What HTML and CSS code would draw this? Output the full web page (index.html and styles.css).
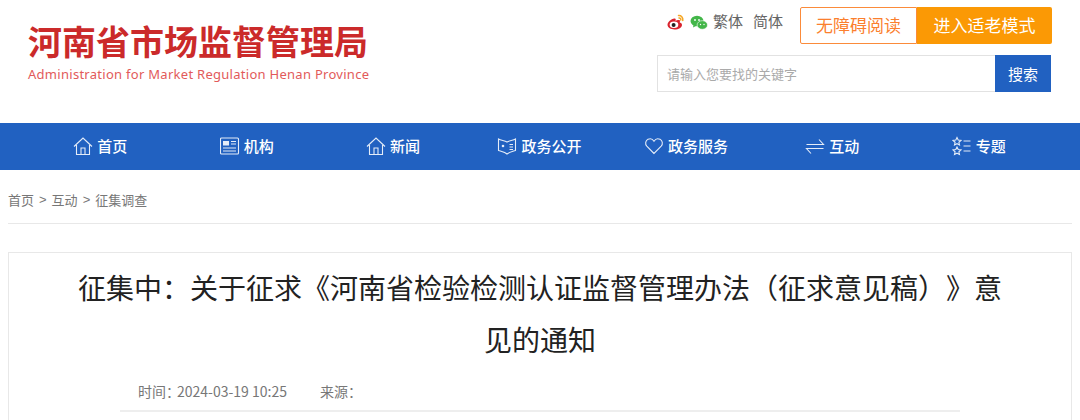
FILE: index.html
```html
<!DOCTYPE html>
<html lang="zh-CN">
<head>
<meta charset="utf-8">
<title>河南省市场监督管理局</title>
<link rel="stylesheet" href="styles.css">
</head>
<body>
<header class="top">
  <div class="brand">
    <div class="brand-cn">河南省市场监督管理局</div>
    <div class="brand-en">Administration for Market Regulation Henan Province</div>
  </div>
  <div class="tools">
    <div class="tools-row">
      <div class="social">
        <svg class="soc-icon" width="20" height="18" viewBox="0 0 20 18"><path d="M8.500 5.500C5 6 1.500 9 1.500 11.800c0 2.800 3.400 4.700 7 4.700 4.300 0 7.500-2.400 7.500-4.600 0-1.500-1.400-2-2.300-2.300.5-1.300.4-2.200-.4-2.500-1-.4-2.800.3-3.800.8.300-1 .3-1.800-.2-2.200-.2-.2-.5-.3-.8-.2z" fill="#d9232e"/><ellipse cx="8" cy="11.800" rx="4.300" ry="3.300" fill="#fff"/><circle cx="7.600" cy="11.900" r="2" fill="#222"/><path d="M12.500 2.500c2.500-.3 4.800 1.700 4.300 5M13 5c1.200-.1 2 .8 1.800 2" fill="none" stroke="#f5a623" stroke-width="1.500" stroke-linecap="round"/></svg>
        <svg class="soc-icon soc-wechat" width="18" height="16" viewBox="0 0 18 16"><ellipse cx="7" cy="6" rx="6.500" ry="5.200" fill="#43b649"/><path d="M3.500 10l-.5 2.500 3-1.500z" fill="#43b649"/><ellipse cx="12.300" cy="10" rx="5.200" ry="4.300" fill="#43b649" stroke="#fff" stroke-width=".6"/><circle cx="5" cy="5" r=".9" fill="#fff"/><circle cx="9" cy="5" r=".9" fill="#fff"/><circle cx="10.500" cy="9.500" r=".7" fill="#fff"/><circle cx="14" cy="9.500" r=".7" fill="#fff"/></svg>
        <a class="lang">繁体</a>
        <a class="lang">简体</a>
      </div>
      <div class="btns">
        <a class="btn btn-outline">无障碍阅读</a>
        <a class="btn btn-solid">进入适老模式</a>
      </div>
    </div>
    <div class="search">
      <div class="search-input">请输入您要找的关键字</div>
      <div class="search-btn">搜索</div>
    </div>
  </div>
</header>

<nav class="nav">
  <a class="nav-item">
    <svg class="ico" viewBox="0 0 20 20"><path d="M1 10.500 10 2l9 8.500M3.500 9v9.500h13V9M8 18.500V12h4v6.500"/></svg>首页
  </a>
  <a class="nav-item">
    <svg class="ico" viewBox="0 0 20 20"><rect x=".5" y="2" width="18" height="16" rx="1"/><rect class="fill" x="3" y="5" width="6" height="4.500"/><path d="M11 5.500h5M11 8h5M3 12h13M3 15h13"/></svg>机构
  </a>
  <a class="nav-item">
    <svg class="ico" viewBox="0 0 20 20"><path d="M1 10.500 10 2l9 8.500M3.500 9v9.500h13V9M8 18.500V12h4v6.500"/></svg>新闻
  </a>
  <a class="nav-item">
    <svg class="ico" viewBox="0 0 20 20"><path d="M1.500 3c2.500 1.500 6 1.500 8.500 3 2.500-1.500 6-1.500 8.500-3v11.500c-2.500 1-6 1.500-8.500 3.500-2.500-2-6-2.500-8.500-3.500zM12.500 8.500h3.500M12.500 11h3.500M12.500 13.500h3.500"/><circle class="fill" cx="6" cy="10" r="1.300"/></svg>政务公开
  </a>
  <a class="nav-item">
    <svg class="ico" viewBox="0 0 20 20"><path d="M10 17.500 2.800 10.200C.8 8 1.500 4.500 4 3.300c2.300-1.100 4.700-.2 6 1.900 1.300-2.100 3.700-3 6-1.900 2.500 1.200 3.200 4.700 1.200 6.900z"/></svg>政务服务
  </a>
  <a class="nav-item">
    <svg class="ico" viewBox="0 0 20 20"><path d="M1.500 8.500h17l-4.500-5M18.500 12.500h-17l4.500 5"/></svg>互动
  </a>
  <a class="nav-item">
    <svg class="ico" viewBox="0 0 20 20"><path d="M5 1.500l1.200 2.600 2.800.3-2.100 1.900.6 2.700L5 7.700 2.500 9l.6-2.700L1 4.400l2.800-.3zM5 11l1.200 2.600 2.800.3-2.100 1.900.6 2.700L5 17.200l-2.500 1.300.6-2.700L1 13.900l2.800-.3zM11.500 5h7M11.500 10h7M11.500 15h7"/></svg>专题
  </a>
</nav>

<div class="crumbs">
  <a>首页</a><span class="sep">&gt;</span><a>互动</a><span class="sep">&gt;</span><a>征集调查</a>
</div>

<main class="card">
  <h1 class="title">征集中：关于征求《河南省检验检测认证监督管理办法（征求意见稿）》意见的通知</h1>
  <div class="meta">
    <span>时间：<span class="meta-date">2024-03-19 10:25</span></span>
    <span>来源：</span>
  </div>
</main>
</body>
</html>
```
FILE: styles.css
```css
* { box-sizing: border-box; }
html, body { margin: 0; padding: 0; height: 420px; overflow: hidden; background: #fff; }
body { font-family: "Noto Sans CJK SC", "Liberation Sans", sans-serif; color: #333; }
svg { display: block; }

.top { height: 123px; padding: 7px 28px 0 28px; display: flex; justify-content: space-between; }
.brand { padding-top: 13px; }
.brand-cn { font-size: 34px; line-height: 42px; font-weight: 700; color: #cb2a2a; white-space: nowrap; }
.brand-en { margin-top: 3px; font-family: "Noto Sans", sans-serif; font-size: 13px; line-height: 18px; letter-spacing: .28px; color: #e25a5a; white-space: nowrap; }

.tools { width: 395px; }
.tools-row { display: flex; justify-content: space-between; height: 37px; }
.social { display: flex; align-items: flex-start; padding: 5px 0 0 9px; }
.soc-icon { margin-right: 4px; margin-top: 1px; }
.soc-wechat { margin-top: 3px; }
.lang { font-size: 15px; line-height: 20px; color: #666; margin: -1px 9px 0 1px; }
.btns { display: flex; }
.btn { height: 37px; font-size: 17px; text-align: center; }
.btn-outline { width: 117px; border: 1px solid #fb8b3a; border-radius: 2px 0 0 2px; color: #fb7f2e; line-height: 34px; }
.btn-solid { width: 135px; background: #fb9905; color: #fff; border-radius: 0 2px 2px 0; line-height: 36px; }

.search { display: flex; height: 37px; margin-top: 11px; width: 394px; }
.search-input { flex: 1; border: 1px solid #e2e2e2; border-right: 0; padding-left: 9px; font-size: 13px; line-height: 35px; color: #aaa; }
.search-btn { width: 56px; background: #2161c1; color: #fff; font-size: 15px; line-height: 37px; text-align: center; }

.nav { height: 47px; background: #2161c1; padding: 0 28px 0 27px; display: grid; grid-template-columns: repeat(7, 1fr); }
.nav-item { display: flex; align-items: center; justify-content: center; gap: 4px; color: #fff; font-size: 15px; line-height: 46px; padding-bottom: 1px; font-weight: 500; }
.ico { width: 20px; height: 20px; fill: none; stroke: #e4ecf8; stroke-width: 1.100; }
.ico .fill { fill: #e4ecf8; stroke: none; }

.crumbs { margin: 0 8px; height: 54px; padding-top: 20px; border-bottom: 1px solid #e8e8e8; font-size: 13px; line-height: 20px; color: #777; display: flex; }
.sep { margin: 0 5px; font-family: "Liberation Sans", sans-serif; }

.card { margin: 28px 8px 0; height: 300px; border: 1px solid #e8e8e8; padding: 8px 68px 0; }
.title { margin: 0; font-size: 28px; line-height: 52px; font-weight: 400; color: #222; text-align: center; text-spacing-trim: space-all; }
.meta { margin: 16px 43px 0; padding: 0 0 9px 18px; border-bottom: 2px solid #eee; font-size: 14px; line-height: 20px; color: #777; display: flex; gap: 33px; }
.meta-date { margin-left: -3px; }
```
